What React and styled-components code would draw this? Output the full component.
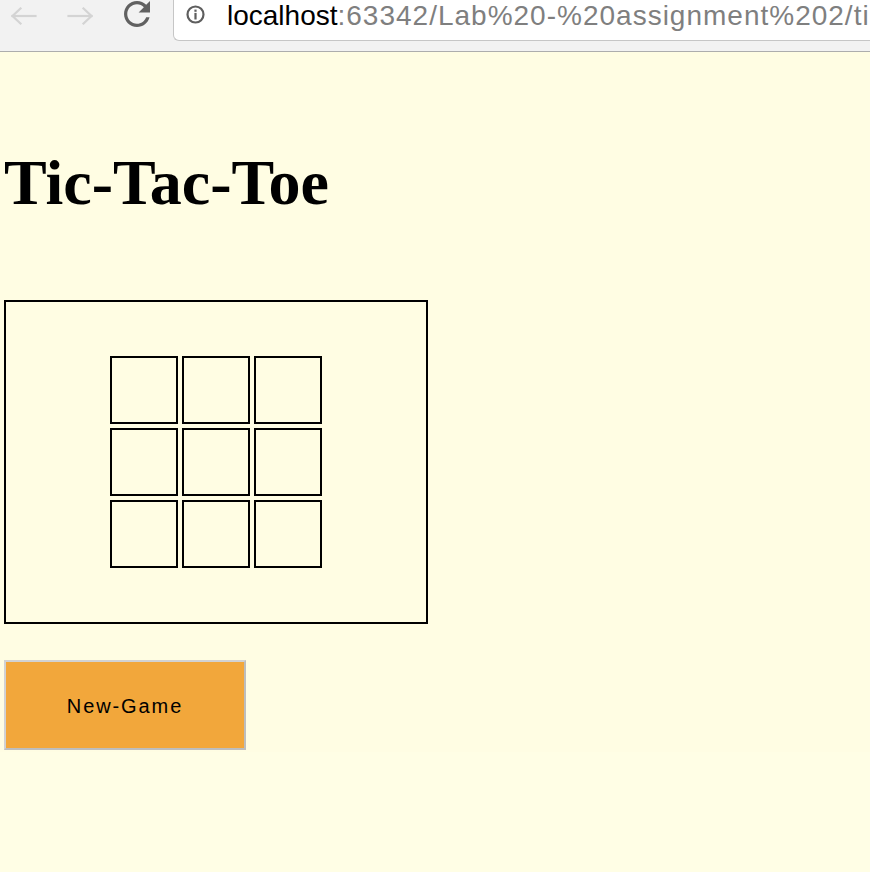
import React from 'react'
import styled, { createGlobalStyle } from 'styled-components'

const GlobalStyle = createGlobalStyle`
  html, body {
    margin: 0;
    padding: 0;
    background: #fffee5;
  }
  * { box-sizing: border-box; }
`

const ChromeBar = styled.div`
  display: flex;
  align-items: flex-start;
  height: 52px;
  background: #f2f2f2;
  border-bottom: 1px solid #adadad;
  overflow: hidden;
`

const NavIcon = styled.div`
  flex-shrink: 0;
  display: flex;
  margin-left: ${props => props.left}px;
  margin-top: ${props => props.top}px;
`

const AddressBox = styled.div`
  flex-shrink: 0;
  display: flex;
  align-items: flex-start;
  width: 900px;
  height: 41px;
  margin-left: 22px;
  padding-left: 12px;
  background: #fff;
  border-left: 1px solid #c6c6c6;
  border-bottom: 1px solid #c6c6c6;
  border-bottom-left-radius: 6px;
`

const InfoIcon = styled.div`
  flex: 0 0 19px;
  display: flex;
  margin-top: 5px;

  svg {
    flex-shrink: 0;
  }
`

const Url = styled.div`
  flex-shrink: 0;
  margin-left: 22px;
  font-family: "Liberation Sans", Arial, sans-serif;
  font-size: 28px;
  line-height: 32px;
  color: #000;
  white-space: nowrap;

  span {
    color: #7f7f7f;
    letter-spacing: 1px;
  }
`

const Page = styled.main`
  height: 700px;
  padding: 0 0 0 4px;
  background: #fffde3;
  display: flex;
  flex-direction: column;
  align-items: flex-start;
`

const Title = styled.h1`
  margin: 94px 0 0;
  font-family: "Liberation Serif", "Times New Roman", serif;
  font-weight: bold;
  font-size: 64px;
  line-height: 74px;
  color: #000;
`

const BoardFrame = styled.div`
  margin-top: 80px;
  width: 424px;
  height: 324px;
  border: 2px solid #000;
  display: flex;
  align-items: center;
  justify-content: center;
`

const Grid = styled.div`
  display: grid;
  grid-template-columns: repeat(3, 68px);
  grid-auto-rows: 68px;
  gap: 4px;
`

const Cell = styled.div`
  border: 2px solid #000;
  cursor: pointer;
`

const NewGame = styled.button`
  margin-top: 36px;
  width: 242px;
  height: 90px;
  padding: 2px 0 0;
  background: #f2a73b;
  border: 2px solid;
  border-color: #d2d2d2 #bdbdbd #bdbdbd #d2d2d2;
  font-family: "Liberation Sans", Arial, sans-serif;
  font-size: 20px;
  letter-spacing: 1.9px;
  color: #000;
  cursor: pointer;
`

const Arrow = ({ flip }) => (
  <svg width="27" height="18" viewBox="0 0 27 18"
    style={{ transform: flip ? 'scaleX(-1)' : 'none' }}
    fill="none" stroke="#d4d4d4" strokeWidth="2.2" strokeLinecap="square">
    <path d="M2.5 9H25.5" />
    <path d="M10.5 1.5L2.5 9L10.5 16.5" />
  </svg>
)

const Reload = () => (
  <svg width="28" height="26" viewBox="4 4 16 16" fill="#616161">
    <path d="M17.65 6.35C16.2 4.9 14.21 4 12 4c-4.42 0-7.99 3.58-7.99 8s3.57 8 7.99 8c3.73 0 6.84-2.55 7.73-6h-2.08c-.82 2.33-3.04 4-5.65 4-3.31 0-6-2.69-6-6s2.69-6 6-6c1.66 0 3.14.69 4.22 1.78L13 11h7V4l-2.35 2.35z" />
  </svg>
)

const Info = () => (
  <svg width="19" height="19" viewBox="0 0 19 19">
    <circle cx="9.5" cy="9.5" r="8" fill="none" stroke="#5e5e5e" strokeWidth="2.2" />
    <rect x="8.4" y="4.6" width="2.2" height="2.2" fill="#5e5e5e" />
    <rect x="8.4" y="7.9" width="2.2" height="6.6" fill="#5e5e5e" />
  </svg>
)

const App = () => {
  const cells = Array.from({ length: 9 })

  return (
    <>
      <GlobalStyle />
      <ChromeBar>
        <NavIcon left={10} top={7}><Arrow /></NavIcon>
        <NavIcon left={30} top={7}><Arrow flip /></NavIcon>
        <NavIcon left={29} top={1}><Reload /></NavIcon>
        <AddressBox>
          <InfoIcon><Info /></InfoIcon>
          <Url>localhost<span>:63342/Lab%20-%20assignment%202/ti</span></Url>
        </AddressBox>
      </ChromeBar>
      <Page>
        <Title>Tic-Tac-Toe</Title>
        <BoardFrame>
          <Grid>
            {cells.map((_, i) => <Cell key={i} />)}
          </Grid>
        </BoardFrame>
        <NewGame>New-Game</NewGame>
      </Page>
    </>
  )
}

export default App
